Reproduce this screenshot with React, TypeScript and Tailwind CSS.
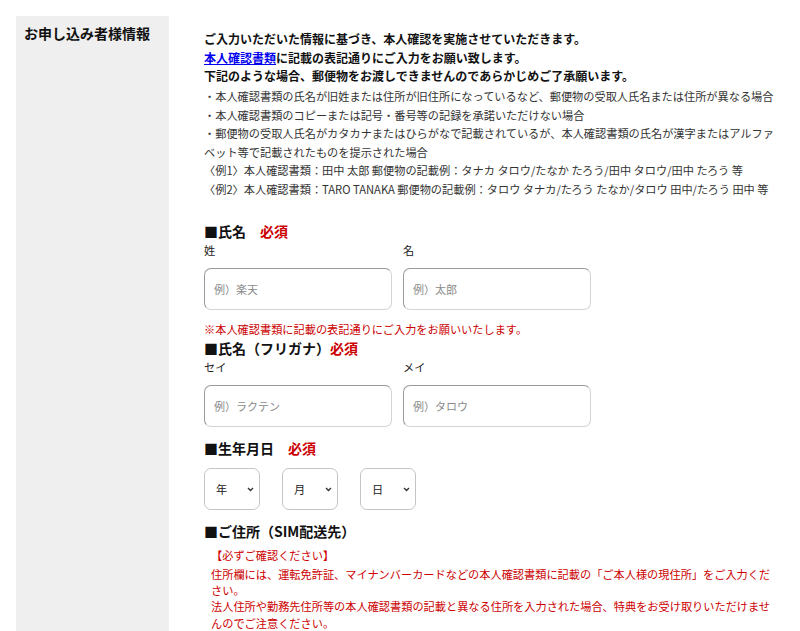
import React from 'react';

const font = { fontFamily: '"Noto Sans CJK JP", "Noto Sans", sans-serif' };

const Required: React.FC<{ spaced?: boolean }> = ({ spaced }) => (
  <span className={`text-[#cc0000] ${spaced ? 'ml-[14px]' : ''}`}>必須</span>
);

const FieldTitle: React.FC<{ children: React.ReactNode }> = ({ children }) => (
  <h3 className="text-[14px] font-bold leading-[20px] text-[#111]">{children}</h3>
);

const TextBox: React.FC<{ label: string; placeholder: string }> = ({ label, placeholder }) => (
  <div className="w-[188px]">
    <div className="text-[11.2px] leading-[16px] text-[#222] mt-[1px]">{label}</div>
    <input
      placeholder={placeholder}
      className="mt-[10px] h-[42px] w-full rounded-[7px] border border-[#d4d4d4] border-t-[#9a9a9a] border-l-[#9a9a9a] bg-white pl-[9px] text-[11px] outline-none placeholder:text-[#8a8a8a]"
    />
  </div>
);

const DateSelect: React.FC<{ label: string }> = ({ label }) => (
  <div className="relative h-[42px] w-[56px] rounded-[7px] border border-[#c4c4c4] bg-white">
    <span className="absolute left-[11px] top-[12px] text-[11.2px] leading-[16px] text-[#222]">{label}</span>
    <svg className="absolute right-[5px] top-[18px]" width="7" height="5" viewBox="0 0 7 5">
      <path d="M1 1l2.5 2.5L6 1" fill="none" stroke="#333" strokeWidth="1.4" />
    </svg>
  </div>
);

export default function App() {
  return (
    <div style={font} className="flex min-h-[631px] bg-white pl-4 pt-4 text-[#222]">
      {/* Section label */}
      <aside className="w-[153px] shrink-0 bg-[#efefef] pl-2 pt-[7px]">
        <h2 className="text-[14px] font-bold leading-[20px] text-[#111]">お申し込み者様情報</h2>
      </aside>

      <main className="ml-[35px] w-[577px] pt-[14px]">
        {/* Intro */}
        <div className="text-[12px] font-bold leading-[18.5px] text-[#111]">
          <p>ご入力いただいた情報に基づき、本人確認を実施させていただきます。</p>
          <p>
            <a href="#" className="text-[#0000ee] underline">本人確認書類</a>
            に記載の表記通りにご入力をお願い致します。
          </p>
          <p>下記のような場合、郵便物をお渡しできませんのであらかじめご了承願います。</p>
        </div>
        <div className="mt-[1.5px] text-[11.2px] leading-[18.6px] text-[#333]">
          <p>・本人確認書類の氏名が旧姓または住所が旧住所になっているなど、郵便物の受取人氏名または住所が異なる場合</p>
          <p>・本人確認書類のコピーまたは記号・番号等の記録を承諾いただけない場合</p>
          <p>・郵便物の受取人氏名がカタカナまたはひらがなで記載されているが、本人確認書類の氏名が漢字またはアルファベット等で記載されたものを提示された場合</p>
          <p>〈例1〉本人確認書類：田中 太郎 郵便物の記載例：タナカ タロウ/たなか たろう/田中 タロウ/田中 たろう 等</p>
          <p>〈例2〉本人確認書類：TARO TANAKA 郵便物の記載例：タロウ タナカ/たろう たなか/タロウ 田中/たろう 田中 等</p>
        </div>

        {/* Name */}
        <div className="mt-[22px]">
          <FieldTitle>
            ■氏名<Required spaced />
          </FieldTitle>
          <div className="flex gap-[11px]">
            <TextBox label="姓" placeholder="例）楽天" />
            <TextBox label="名" placeholder="例）太郎" />
          </div>
          <p className="mt-[11px] text-[11.2px] leading-[16px] text-[#cc0000]">
            ※本人確認書類に記載の表記通りにご入力をお願いいたします。
          </p>
        </div>

        {/* Name kana */}
        <div className="mt-[1px]">
          <FieldTitle>
            ■氏名（フリガナ）<Required />
          </FieldTitle>
          <div className="flex gap-[11px]">
            <TextBox label="セイ" placeholder="例）ラクテン" />
            <TextBox label="メイ" placeholder="例）タロウ" />
          </div>
        </div>

        {/* Birthday */}
        <div className="mt-[11px]">
          <FieldTitle>
            ■生年月日<Required spaced />
          </FieldTitle>
          <div className="mt-[10px] flex gap-[22px]">
            <DateSelect label="年" />
            <DateSelect label="月" />
            <DateSelect label="日" />
          </div>
        </div>

        {/* Address */}
        <div className="mt-[11px]">
          <FieldTitle>■ご住所（SIM配送先）</FieldTitle>
          <div className="mt-[6px] pl-[7px] text-[11.2px] leading-[16.3px] text-[#cc0000]">
            <p className="mb-[3px]">【必ずご確認ください】</p>
            <p>住所欄には、運転免許証、マイナンバーカードなどの本人確認書類に記載の「ご本人様の現住所」をご入力ください。</p>
            <p>法人住所や勤務先住所等の本人確認書類の記載と異なる住所を入力された場合、特典をお受け取りいただけませんのでご注意ください。</p>
          </div>
        </div>
      </main>
    </div>
  );
}
